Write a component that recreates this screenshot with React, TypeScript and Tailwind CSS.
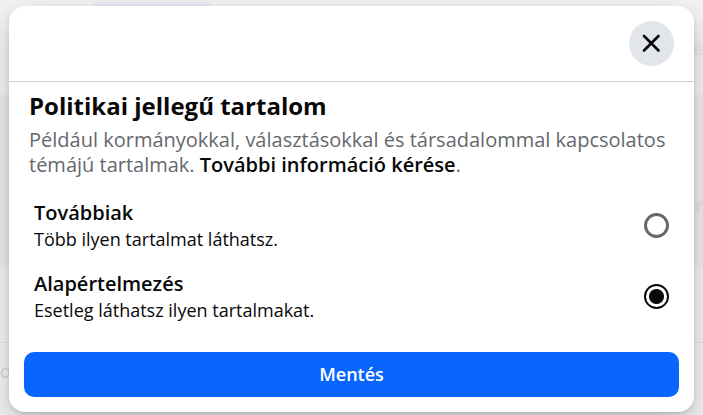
import React, { useState } from "react";

const options = [
  { id: "more", title: "Továbbiak", text: "Több ilyen tartalmat láthatsz." },
  { id: "default", title: "Alapértelmezés", text: "Esetleg láthatsz ilyen tartalmakat." }
];

// Dimmed page that shows around the dialog
const Backdrop = () => {
  return (
    <div aria-hidden="true" className="absolute inset-0 flex flex-col overflow-hidden bg-[#f2f2f2]">
      <div className="flex h-[95px] flex-col">
        <div className="mt-0.5 ml-[93px] h-2 w-[118px] bg-[#e8eaf2]" />
        <p className="mt-6 text-right text-lg text-[#e4e4e4]">e</p>
      </div>
      <div className="flex h-[172px] flex-col bg-[#ebebeb]">
        <p className="mt-24 text-right text-lg font-bold text-[#e2e2e2]">er</p>
      </div>
      <div className="h-[76px] border-b border-[#e4e4e4]" />
      <p className="mt-3.5 text-lg text-[#d6d6d6]">o</p>
    </div>
  );
};

const App = () => {
  const [selected, setSelected] = useState("default");

  return (
    <div className="relative min-h-screen overflow-hidden px-[9px] pt-1.5 pb-[3px] font-['Open_Sans','Noto_Sans',sans-serif]">
      <Backdrop />
      <div
        role="dialog"
        aria-labelledby="dialog-title"
        className="relative rounded-2xl bg-white shadow-[0_2px_4px_rgba(0,0,0,0.1),0_12px_28px_rgba(0,0,0,0.2)]"
      >
        <div className="flex justify-end border-b border-[#ced0d4] px-5 py-[15px]">
          <button
            type="button"
            aria-label="Bezárás"
            className="flex size-[45px] items-center justify-center rounded-full bg-[#e2e5e9]"
          >
            <svg viewBox="0 0 19 19" className="size-[19px]" fill="none" stroke="#080809" strokeWidth="2.6" strokeLinecap="round">
              <path d="M2 2 16.5 16.5M16.5 2 2 16.5" />
            </svg>
          </button>
        </div>

        <form className="px-[15px] pb-[15px]" onSubmit={(e) => e.preventDefault()}>
          <div className="px-[5px] pt-2">
            <h2 id="dialog-title" className="text-[24px] leading-8 font-bold text-[#080809]">
              Politikai jellegű tartalom
            </h2>
            <p className="mt-[5px] text-[20px] leading-[25px] text-[#65686c]">
              Például kormányokkal, választásokkal és társadalommal kapcsolatos témájú tartalmak.{" "}
              <a href="#" className="font-semibold text-[#080809]">
                További információ kérése
              </a>
              .
            </p>
          </div>

          <div className="mt-[22px] flex flex-col gap-[19px] px-2.5">
            {options.map((option) => (
              <label key={option.id} className="flex items-center justify-between text-[#080809]">
                <span className="flex flex-col">
                  <span className="text-[20px] leading-7 font-semibold">{option.title}</span>
                  <span className="text-[18px] leading-6">{option.text}</span>
                </span>
                <input
                  type="radio"
                  name="content"
                  value={option.id}
                  checked={selected === option.id}
                  onChange={() => setSelected(option.id)}
                  className="size-[25px] appearance-none rounded-full border-[3px] border-[#65686c] checked:border-2 checked:border-[#080809] checked:bg-[radial-gradient(circle,#080809_7px,transparent_8px)]"
                />
              </label>
            ))}
          </div>

          <button type="submit" className="mt-[30px] h-[45px] w-full rounded-[10px] bg-[#0866ff] text-[18px] font-semibold text-white">
            Mentés
          </button>
        </form>
      </div>
    </div>
  );
};

export default App;
